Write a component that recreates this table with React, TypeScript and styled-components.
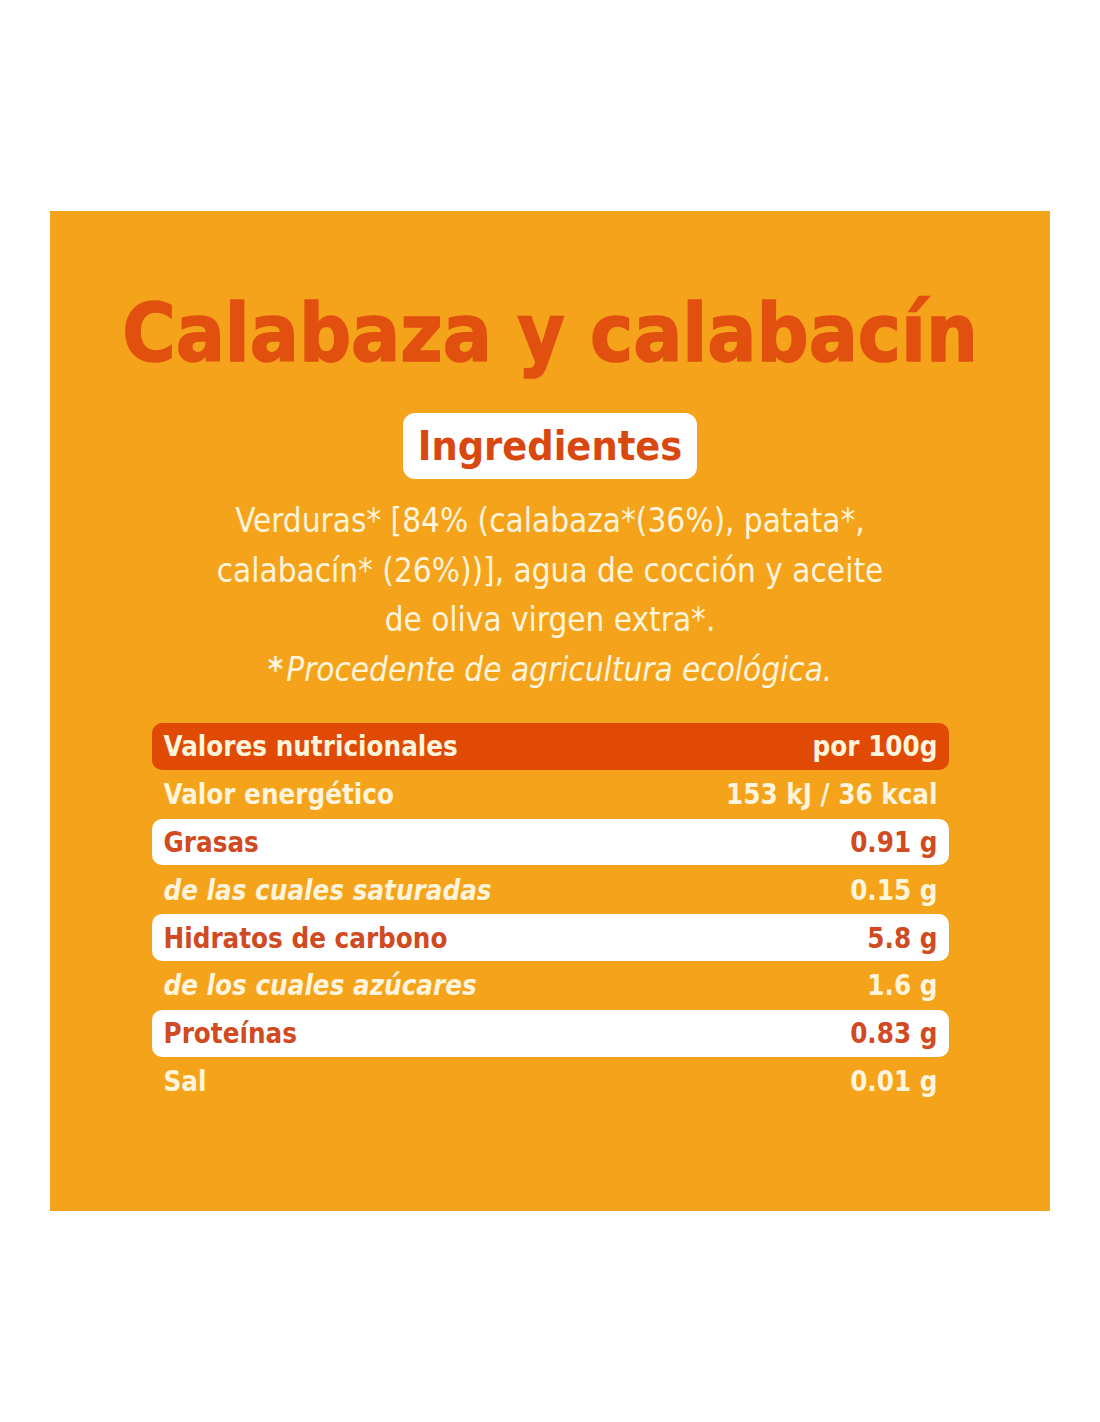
import styled, { createGlobalStyle } from "styled-components";

const GlobalStyle = createGlobalStyle`
  html, body {
    margin: 0;
    padding: 0;
    background: #fff;
  }
`;

const Page = styled.div`
  padding: 211px 50px 212px 50px;
`;

const Panel = styled.div`
  height: 1000px;
  background: #f5a31b;
  display: flex;
  flex-direction: column;
  align-items: center;
  font-family: "DejaVu Sans", "Liberation Sans", sans-serif;
  font-stretch: condensed;
`;

const Title = styled.h1`
  margin: 72px 0 0 0;
  font-size: 81px;
  line-height: 100px;
  font-weight: 700;
  color: #e1500f;
  -webkit-text-stroke: 1.5px #e1500f;
`;

const Pill = styled.div`
  margin-top: 30px;
  background: #fff;
  border-radius: 12px;
  padding: 0 15px;
  height: 66px;
  display: flex;
  align-items: center;
  font-size: 41px;
  font-weight: 700;
  color: #d9480f;
`;

const Ingredients = styled.div`
  margin-top: 17px;
  width: 760px;
  text-align: center;
  font-size: 33px;
  line-height: 49.5px;
  color: #fff4dc;
`;

const Note = styled.div`
  font-style: italic;
  b {
    font-style: normal;
    margin-right: 3px;
  }
`;

const Table = styled.div`
  margin-top: 29px;
  width: 797px;
  display: flex;
  flex-direction: column;
  gap: 1px;
`;

type RowKind = "head" | "plain" | "white";

const Row = styled.div<{ $kind: RowKind }>`
  height: 46.8px;
  display: flex;
  justify-content: space-between;
  align-items: center;
  padding: 0 11px 0 12px;
  border-radius: 10px;
  font-size: 27.5px;
  font-weight: 700;
  background: ${(p) =>
    p.$kind === "head" ? "#e04a05" : p.$kind === "white" ? "#fff" : "transparent"};
  color: ${(p) => (p.$kind === "white" ? "#d04a22" : "#fff4dc")};
`;

const Label = styled.span<{ $italic?: boolean }>`
  font-style: ${(p) => (p.$italic ? "italic" : "normal")};
`;

const rows: { label: string; value: string; kind: RowKind; italic?: boolean }[] = [
  { label: "Valores nutricionales", value: "por 100g", kind: "head" },
  { label: "Valor energético", value: "153 kJ / 36 kcal", kind: "plain" },
  { label: "Grasas", value: "0.91 g", kind: "white" },
  { label: "de las cuales saturadas", value: "0.15 g", kind: "plain", italic: true },
  { label: "Hidratos de carbono", value: "5.8 g", kind: "white" },
  { label: "de los cuales azúcares", value: "1.6 g", kind: "plain", italic: true },
  { label: "Proteínas", value: "0.83 g", kind: "white" },
  { label: "Sal", value: "0.01 g", kind: "plain" },
];

export default function App() {
  return (
    <>
      <GlobalStyle />
      <Page>
        <Panel>
          <Title>Calabaza y calabacín</Title>
          <Pill>Ingredientes</Pill>
          <Ingredients>
            <div>Verduras* [84% (calabaza*(36%), patata*,</div>
            <div>calabacín* (26%))], agua de cocción y aceite</div>
            <div>de oliva virgen extra*.</div>
            <Note>
              <b>*</b>Procedente de agricultura ecológica.
            </Note>
          </Ingredients>
          <Table>
            {rows.map((r) => (
              <Row key={r.label} $kind={r.kind}>
                <Label $italic={r.italic}>{r.label}</Label>
                <span>{r.value}</span>
              </Row>
            ))}
          </Table>
        </Panel>
      </Page>
    </>
  );
}
